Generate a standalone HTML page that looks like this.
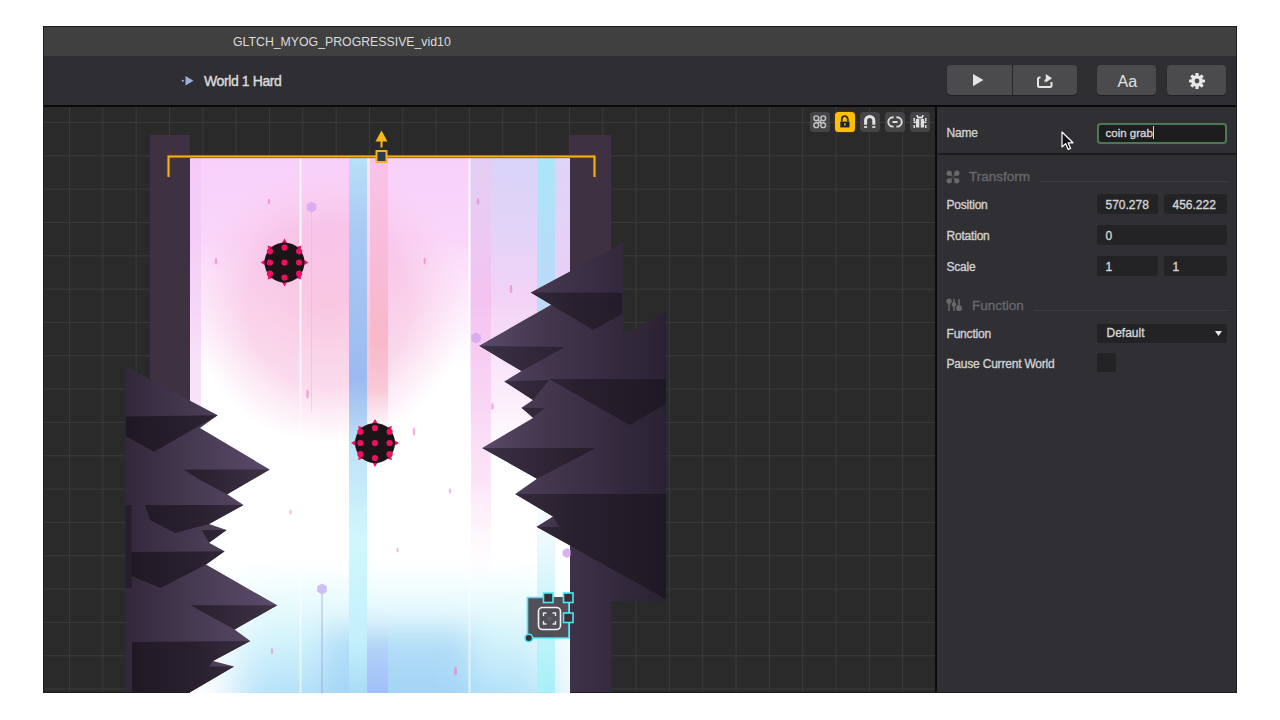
<!DOCTYPE html>
<html><head><meta charset="utf-8">
<style>
*{margin:0;padding:0;box-sizing:border-box}
html,body{width:1280px;height:720px;background:#fff;overflow:hidden;font-family:"Liberation Sans",sans-serif}
.a{position:absolute}
#win{left:43px;top:26px;width:1194px;height:667px;background:#302f34;border:1px solid #1c1c1c;overflow:visible}
#title{left:0;top:0;width:1192px;height:29px;background:#404040}
#tb{left:0;top:29px;width:1192px;height:50px;background:#2f2e33}
#tb>*{margin-top:1px}
#tline{left:0;top:78px;width:1192px;height:2px;background:#0a0a0c}
#canvas{left:0;top:80px;width:892px;height:585px;background-color:#2a2a2a;
 background-image:linear-gradient(#3a3a3a 1px,transparent 1px),linear-gradient(90deg,#3a3a3a 1px,transparent 1px);
 background-size:33.33px 33.33px;background-position:25px 15px}
#vline{left:891px;top:80px;width:2px;height:585px;background:#0a0a0c}
#panel{left:893px;top:80px;width:299px;height:585px;background:#302f34}
#panel>*{margin-left:1px}
.txt{color:#e6e6e6;white-space:nowrap}
.btn{background:#4b4b4d;border-radius:4px;box-shadow:0 1px 1px rgba(0,0,0,.35)}
.lbl{position:absolute;left:8.5px;font-size:12px;color:#d0d0d0;font-weight:normal;letter-spacing:-0.2px;-webkit-text-stroke:0.35px #d0d0d0}
.inp{position:absolute;background:#232325;border-radius:3px}
.val{position:absolute;font-size:12px;color:#d4d4d4;font-weight:normal;letter-spacing:0px;-webkit-text-stroke:0.35px #d4d4d4}
.ib{position:absolute;width:20px;height:20px;border-radius:3.5px;background:#454548}
</style></head><body>
<div id="win" class="a">
  <div id="title" class="a"><div class="a txt" style="left:189px;top:8px;font-size:12.3px;color:#dcdcdc">GLTCH_MYOG_PROGRESSIVE_vid10</div></div>
  <div id="tb" class="a">
    <div class="a txt" style="left:160px;top:16px;font-size:14px;color:#dadada;letter-spacing:-0.4px;-webkit-text-stroke:0.4px #dadada">World 1 Hard</div>
    <svg class="a" style="left:137px;top:18px" width="14" height="12" viewBox="0 0 14 12"><circle cx="1.8" cy="5.8" r="1" fill="#a8b8e0"/><path d="M4.5 1 L12.5 5.8 L4.5 10.6Z" fill="#9cb0e0"/></svg>
    <div class="a btn" style="left:902.5px;top:8px;width:130px;height:30px"></div>
    <div class="a" style="left:967.5px;top:8px;width:1px;height:30px;background:#262529"></div>
    <svg class="a" style="left:927px;top:15px" width="14" height="16" viewBox="0 0 14 16"><path d="M2 2 L12.4 8 L2 14.2Z" fill="#e4e4e4"/></svg>
    <svg class="a" style="left:991px;top:13px" width="18" height="20" viewBox="0 0 18 20"><path d="M5.5 7.5 H4.5 Q3 7.5 3 9 V15.5 Q3 17 4.5 17 H15 Q16.5 17 16.5 15.5 V12" stroke="#e4e4e4" stroke-width="2" fill="none"/><path d="M9.5 13.5 V10.5 Q9.5 9 11 9 H10.8 L10.8 4 L17 8.2 L10.8 12.4 V11 Q9.5 11 9.5 13.5Z" fill="#e4e4e4"/></svg>
    <div class="a btn" style="left:1052.5px;top:8px;width:59px;height:30px"></div>
    <div class="a txt" style="left:1073.5px;top:16px;font-size:16px;color:#e0e0e0">Aa</div>
    <div class="a btn" style="left:1123px;top:8px;width:59px;height:30px"></div>
    <svg class="a" style="left:1144px;top:15px" width="18" height="18" viewBox="0 0 18 18"><g fill="#e8e8e8"><circle cx="9" cy="9" r="5.8"/><rect x="7.4" y="1" width="3.2" height="16" rx="0.6"/><rect x="7.4" y="1" width="3.2" height="16" rx="0.6" transform="rotate(45 9 9)"/><rect x="7.4" y="1" width="3.2" height="16" rx="0.6" transform="rotate(90 9 9)"/><rect x="7.4" y="1" width="3.2" height="16" rx="0.6" transform="rotate(135 9 9)"/></g><circle cx="9" cy="9" r="2.4" fill="#4b4b4d"/></svg>
  </div>
  <div id="tline" class="a"></div>
  <div id="canvas" class="a">
    <svg class="a" style="left:0;top:0;overflow:visible" width="892" height="586" viewBox="44 107 892 586">
<defs>
<linearGradient id="gTop" x1="0" y1="158" x2="0" y2="693" gradientUnits="userSpaceOnUse"><stop offset="0.0000" stop-color="#f8d0fa" stop-opacity="1"/><stop offset="0.1533" stop-color="#fad6fa" stop-opacity="1"/><stop offset="0.2654" stop-color="#fcdefa" stop-opacity="0.6"/><stop offset="0.3963" stop-color="#fde8fa" stop-opacity="0.0"/></linearGradient>
<filter id="bl30" x="-50%" y="-50%" width="200%" height="200%"><feGaussianBlur stdDeviation="28"/></filter><filter id="bl15" x="-50%" y="-50%" width="200%" height="200%"><feGaussianBlur stdDeviation="14"/></filter><clipPath id="cLight"><rect x="190" y="158" width="380" height="535"/></clipPath>
<radialGradient id="gPink" cx="328" cy="305" r="138" gradientUnits="userSpaceOnUse"><stop offset="0" stop-color="#f6acd0" stop-opacity="0.6"/><stop offset="0.6" stop-color="#f6b6da" stop-opacity="0.5"/><stop offset="0.85" stop-color="#f8c4e2" stop-opacity="0.22"/><stop offset="1" stop-color="#f9c8e8" stop-opacity="0"/></radialGradient>
<radialGradient id="gBlue" cx="400" cy="705" r="150" gradientTransform="translate(400 705) scale(1.25 0.85) translate(-400 -705)" gradientUnits="userSpaceOnUse"><stop offset="0" stop-color="#94c8f4" stop-opacity="1"/><stop offset="0.45" stop-color="#a8d6f6" stop-opacity="0.85"/><stop offset="0.8" stop-color="#c8ecfa" stop-opacity="0.35"/><stop offset="1" stop-color="#d8f4fc" stop-opacity="0"/></radialGradient>
<radialGradient id="gCyanGlow" cx="290" cy="705" r="120" gradientTransform="translate(290 705) scale(1.2 1) translate(-290 -705)" gradientUnits="userSpaceOnUse"><stop offset="0" stop-color="#b8ecfa" stop-opacity="0.9"/><stop offset="1" stop-color="#d8f6fc" stop-opacity="0"/></radialGradient>
<linearGradient id="gBotV" x1="0" y1="560" x2="0" y2="710" gradientUnits="userSpaceOnUse"><stop offset="0.0000" stop-color="#e0f8fc" stop-opacity="0"/><stop offset="0.2667" stop-color="#d8f8fc" stop-opacity="0.55"/><stop offset="0.5667" stop-color="#c4eefa" stop-opacity="0.8"/><stop offset="0.8800" stop-color="#b0e0f8" stop-opacity="0.95"/></linearGradient>
<filter id="blX" x="-30%" y="-30%" width="160%" height="160%"><feGaussianBlur stdDeviation="22 6"/></filter>
<linearGradient id="gGap" x1="0" y1="158" x2="0" y2="693" gradientUnits="userSpaceOnUse"><stop offset="0.0000" stop-color="#ffffff" stop-opacity="0.6"/><stop offset="0.2654" stop-color="#ffffff" stop-opacity="0.3"/><stop offset="0.4523" stop-color="#ffffff" stop-opacity="0"/></linearGradient>
<linearGradient id="gBlueS" x1="0" y1="158" x2="0" y2="693" gradientUnits="userSpaceOnUse"><stop offset="0.0000" stop-color="#b8e0f8" stop-opacity="1"/><stop offset="0.1346" stop-color="#aacaf4" stop-opacity="1"/><stop offset="0.4150" stop-color="#9cbaf0" stop-opacity="1"/><stop offset="0.5458" stop-color="#c0e2f8" stop-opacity="1"/><stop offset="0.7140" stop-color="#d0f8fc" stop-opacity="1"/><stop offset="0.9009" stop-color="#c4f0fc" stop-opacity="1"/><stop offset="1.0000" stop-color="#a8dcf6" stop-opacity="1"/></linearGradient>
<linearGradient id="gPinkS" x1="0" y1="158" x2="0" y2="693" gradientUnits="userSpaceOnUse"><stop offset="0.0000" stop-color="#f8c4ea" stop-opacity="1"/><stop offset="0.1533" stop-color="#f8bcdc" stop-opacity="1"/><stop offset="0.3402" stop-color="#f8b8c8" stop-opacity="1"/><stop offset="0.4336" stop-color="#f8c4d2" stop-opacity="0.85"/><stop offset="0.5271" stop-color="#ffeef2" stop-opacity="0.0"/><stop offset="0.8262" stop-color="#ffffff" stop-opacity="0"/><stop offset="0.9196" stop-color="#b0bcf8" stop-opacity="0.35"/><stop offset="1.0000" stop-color="#a0b4fc" stop-opacity="0.65"/></linearGradient>
<linearGradient id="gMidP" x1="0" y1="158" x2="0" y2="693" gradientUnits="userSpaceOnUse"><stop offset="0.0000" stop-color="#f9cdf2" stop-opacity="0.0"/><stop offset="0.2654" stop-color="#f8c0dc" stop-opacity="0.0"/><stop offset="0.4897" stop-color="#fad0e4" stop-opacity="0.0"/></linearGradient>
<linearGradient id="gLav" x1="0" y1="158" x2="0" y2="693" gradientUnits="userSpaceOnUse"><stop offset="0.0000" stop-color="#d8d4f8" stop-opacity="1"/><stop offset="0.1346" stop-color="#e2d4f8" stop-opacity="1"/><stop offset="0.2654" stop-color="#f2d2f6" stop-opacity="0.95"/><stop offset="0.4523" stop-color="#fae2f8" stop-opacity="0.6"/><stop offset="0.6019" stop-color="#ffffff" stop-opacity="0"/></linearGradient>
<linearGradient id="gLavP" x1="0" y1="158" x2="0" y2="693" gradientUnits="userSpaceOnUse"><stop offset="0.0000" stop-color="#f0c8f0" stop-opacity="0.5"/><stop offset="0.2654" stop-color="#f4b8ec" stop-opacity="0.6"/><stop offset="0.6019" stop-color="#f8c8f0" stop-opacity="0.5"/><stop offset="0.8262" stop-color="#ffffff" stop-opacity="0"/></linearGradient>
<linearGradient id="gRZ" x1="0" y1="158" x2="0" y2="693" gradientUnits="userSpaceOnUse"><stop offset="0.0000" stop-color="#e0d4f8" stop-opacity="1"/><stop offset="0.3215" stop-color="#eccef6" stop-opacity="1"/><stop offset="0.5458" stop-color="#fae6fa" stop-opacity="0.5"/><stop offset="0.7140" stop-color="#ffffff" stop-opacity="0"/></linearGradient>
<linearGradient id="gCyan" x1="0" y1="158" x2="0" y2="693" gradientUnits="userSpaceOnUse"><stop offset="0.0000" stop-color="#aae6f8" stop-opacity="1"/><stop offset="0.1907" stop-color="#b8dcf8" stop-opacity="1"/><stop offset="0.4523" stop-color="#c4d4f8" stop-opacity="0.9"/><stop offset="0.6393" stop-color="#e8f6fc" stop-opacity="0.3"/><stop offset="0.8262" stop-color="#c8f4fc" stop-opacity="0.9"/><stop offset="1.0000" stop-color="#a8f0f8" stop-opacity="1"/></linearGradient>
<linearGradient id="gWL" x1="0" y1="158" x2="0" y2="693" gradientUnits="userSpaceOnUse"><stop offset="0.0000" stop-color="#ffffff" stop-opacity="0.7"/><stop offset="0.1720" stop-color="#ffffff" stop-opacity="0.95"/><stop offset="0.4150" stop-color="#ffffff" stop-opacity="0.6"/><stop offset="0.6393" stop-color="#ffffff" stop-opacity="0.3"/><stop offset="1.0000" stop-color="#ffffff" stop-opacity="0.6"/></linearGradient>
<linearGradient id="gLEdge" x1="0" y1="158" x2="0" y2="693" gradientUnits="userSpaceOnUse"><stop offset="0.0000" stop-color="#f0c0f4" stop-opacity="0.35"/><stop offset="0.2654" stop-color="#f0c0f4" stop-opacity="0.5"/><stop offset="0.5458" stop-color="#f2c8f4" stop-opacity="0.5"/><stop offset="0.7514" stop-color="#ffffff" stop-opacity="0"/></linearGradient>
<linearGradient id="gSpU" x1="125" y1="0" x2="280" y2="0" gradientUnits="userSpaceOnUse"><stop offset="0" stop-color="#32283a"/><stop offset="0.45" stop-color="#463a52"/><stop offset="1" stop-color="#5e4c6e"/></linearGradient>
<linearGradient id="gSpD" x1="125" y1="0" x2="280" y2="0" gradientUnits="userSpaceOnUse"><stop offset="0" stop-color="#1f1824"/><stop offset="0.5" stop-color="#2a2131"/><stop offset="1" stop-color="#403548"/></linearGradient>
<linearGradient id="gSpUR" x1="666" y1="0" x2="480" y2="0" gradientUnits="userSpaceOnUse"><stop offset="0" stop-color="#2a2232"/><stop offset="0.35" stop-color="#372c41"/><stop offset="0.73" stop-color="#473a52"/><stop offset="1" stop-color="#5c4b6c"/></linearGradient>
<linearGradient id="gSpDR" x1="666" y1="0" x2="480" y2="0" gradientUnits="userSpaceOnUse"><stop offset="0" stop-color="#1e1824"/><stop offset="0.5" stop-color="#29202f"/><stop offset="1" stop-color="#3c3146"/></linearGradient>
<g id="ball"><g fill="#ee1060"><path d="M0 -24 L3.2 -18.5 L-3.2 -18.5Z" transform="rotate(0)"/><path d="M0 -24 L3.2 -18.5 L-3.2 -18.5Z" transform="rotate(45)"/><path d="M0 -24 L3.2 -18.5 L-3.2 -18.5Z" transform="rotate(90)"/><path d="M0 -24 L3.2 -18.5 L-3.2 -18.5Z" transform="rotate(135)"/><path d="M0 -24 L3.2 -18.5 L-3.2 -18.5Z" transform="rotate(180)"/><path d="M0 -24 L3.2 -18.5 L-3.2 -18.5Z" transform="rotate(225)"/><path d="M0 -24 L3.2 -18.5 L-3.2 -18.5Z" transform="rotate(270)"/><path d="M0 -24 L3.2 -18.5 L-3.2 -18.5Z" transform="rotate(315)"/></g><circle r="20" fill="#1b1517"/><g fill="#ee1060"><circle cx="0" cy="-15" r="3.1"/><circle cx="0" cy="15" r="3.1"/><circle cx="-14.6" cy="0" r="3.1"/><circle cx="14.6" cy="0" r="3.1"/><circle cx="0" cy="0" r="3.1"/><circle cx="-14.6" cy="-11.2" r="3.1"/><circle cx="14.6" cy="-11.2" r="3.1"/><circle cx="-14.6" cy="11.2" r="3.1"/><circle cx="14.6" cy="11.2" r="3.1"/></g></g>
</defs>
<rect x="150" y="135" width="40" height="557" fill="#3d3142"/>
<rect x="570" y="135" width="41" height="557" fill="#3d3142"/>
<rect x="190" y="158" width="380" height="535" fill="#ffffff"/>
<rect x="190" y="158" width="380" height="535" fill="url(#gTop)"/>
<rect x="190" y="158" width="380" height="535" fill="url(#gPink)"/>
<g clip-path="url(#cLight)">
<rect x="235" y="560" width="320" height="150" fill="url(#gBotV)" filter="url(#blX)"/>
<rect x="325" y="630" width="145" height="90" fill="#94c8f4" opacity="0.5" filter="url(#bl15)"/>
</g>
<rect x="190" y="158" width="11" height="535" fill="url(#gLEdge)"/>
<rect x="388" y="158" width="34" height="535" fill="url(#gMidP)"/>
<rect x="469" y="158" width="68" height="535" fill="url(#gLav)"/>
<rect x="471" y="158" width="20" height="535" fill="url(#gLavP)"/>
<rect x="555" y="158" width="15" height="535" fill="url(#gRZ)"/>
<rect x="349" y="158" width="18" height="535" fill="url(#gBlueS)"/>
<rect x="367" y="158" width="21" height="535" fill="url(#gPinkS)"/>
<rect x="367" y="158" width="3" height="535" fill="url(#gGap)"/>
<rect x="537" y="158" width="18" height="535" fill="url(#gCyan)"/>
<rect x="299.5" y="158" width="2" height="535" fill="url(#gWL)"/>
<rect x="468.5" y="158" width="2" height="535" fill="url(#gWL)"/>
<g fill="#d6aaf0" opacity="0.9">
 <path d="M311.5 201.5 L316.3 204.2 L316.3 209.8 L311.5 212.5 L306.7 209.8 L306.7 204.2Z"/>
 <path d="M476.0 332.5 L480.8 335.2 L480.8 340.8 L476.0 343.5 L471.2 340.8 L471.2 335.2Z"/>
 <path d="M322.0 583.5 L326.8 586.2 L326.8 591.8 L322.0 594.5 L317.2 591.8 L317.2 586.2Z" fill="#c8b8f2"/>
 <path d="M567.0 548.0 L571.3 550.5 L571.3 555.5 L567.0 558.0 L562.7 555.5 L562.7 550.5Z"/>
</g>
<rect x="311" y="212" width="1" height="200" fill="#e8a8e8" opacity="0.4"/>
<rect x="321.5" y="594" width="1" height="100" fill="#9aa0d0" opacity="0.7"/>
<g fill="#f070c0" opacity="0.55"><ellipse cx="269" cy="201.5" rx="1.2" ry="3"/><ellipse cx="216" cy="261" rx="1.2" ry="3.5"/><ellipse cx="424.7" cy="261" rx="1.2" ry="3.5"/><ellipse cx="478" cy="201.5" rx="1.2" ry="3.5"/><ellipse cx="511" cy="289" rx="1.3" ry="4"/><ellipse cx="307.5" cy="394" rx="1.3" ry="4.5"/><ellipse cx="414" cy="431.5" rx="1.3" ry="4"/><ellipse cx="450" cy="491" rx="1" ry="3"/><ellipse cx="492.5" cy="406.5" rx="1.2" ry="3.5"/><ellipse cx="272" cy="651" rx="1.2" ry="3"/><ellipse cx="455.6" cy="671" rx="1.5" ry="4.5"/><ellipse cx="397.5" cy="550" rx="1" ry="2.5"/><ellipse cx="290.5" cy="512" rx="1" ry="2.5"/><ellipse cx="554" cy="431" rx="1.2" ry="4"/></g>
<use href="#ball" x="284.5" y="262.5"/>
<use href="#ball" x="375" y="443"/>
<!-- left spikes -->
<g>
 <polygon fill="url(#gSpU)" points="125.6,366.8 217.7,415.2 200,428 269.7,469.5 227.2,494.3 243.5,505 209,524 226.6,530 209,542.7 224.6,551.2 206,564.6 277.3,605.3 234.6,629.5 250.3,641 213,661 234,666.5 190.5,692 125.6,692"/>
 <g fill="url(#gSpD)">
  <polygon points="125.6,416.4 217.7,415.2 154,451.8 125.6,436"/>
  <polygon points="183.5,469.5 269.7,469.5 227.2,494.3 200,480"/>
  <polygon points="145,505 243.5,505 209,524 175,533 150,520"/>
  <polygon points="201.8,530 226.6,530 209,542.7"/>
  <polygon points="129,552 224.6,551.2 206,564.6 160.6,588 129,575"/>
  <polygon points="190.5,605.3 277.3,605.3 234.6,629.5"/>
  <polygon points="132,642 250.3,641 213,661 190.5,692 132,692"/>
  <polygon points="195,666.5 234,666.5 190.5,692 190.5,670"/>
 </g>
 <rect x="125.6" y="505" width="6" height="83" fill="#261e2c"/>
</g>
<!-- right spikes -->
<g>
 <polygon fill="url(#gSpUR)" points="623,243 530.7,292.5 551.6,304.4 479.2,345.8 521.5,371 504.3,381.4 533,400 521.5,407.8 533,418 482.2,448 537,478.7 515.2,493.9 553,516.6 536.5,526.8 570.6,545.8 570.6,692 611,692 611,601 666,601 666,311 623,335"/>
 <g fill="url(#gSpDR)">
  <polygon points="530.7,292.5 622,292.5 622,314 593,330"/>
  <polygon points="479.2,345.8 565,347 521.5,371"/>
  <polygon points="504.3,381.4 549,380 533,400"/>
  <polygon points="549,379 666,379 666,404 629.7,425"/>
  <polygon points="521.5,407.8 545,408 533,417"/>
  <polygon points="482.2,448 596,448 537,478.7"/>
  <polygon points="515.2,493.9 666,494 666,599 608,567 570.6,546 553,516.6"/>
  <polygon points="536.5,526.8 569,527 570.6,545.8"/>
 </g>
</g>

<!-- selected -->
<g>
 <rect x="527.5" y="597" width="41.5" height="41" rx="2" fill="#4a4650" opacity="0.95"/>
 <path d="M548 597.5 H527.5 V638 H569 V597.5" fill="none" stroke="#50e4f4" stroke-width="1.6"/>
 <rect x="538.5" y="607.5" width="22" height="22" rx="4" fill="none" stroke="#f2f2f2" stroke-width="1.6"/>
 <path d="M543.5 616 V613 H546.5 M552.5 613 H555.5 V616 M555.5 621 V624 H552.5 M546.5 624 H543.5 V621" fill="none" stroke="#e8e8e8" stroke-width="1.4"/>
 <circle cx="549.5" cy="618.5" r="2.2" fill="#5e5a62"/>
 <g fill="#3a3038" stroke="#50e4f4" stroke-width="1.6">
  <rect x="543.5" y="593" width="9.5" height="9.5"/>
  <rect x="563.5" y="593" width="9.5" height="9.5"/>
  <rect x="563.5" y="613" width="9.5" height="9.5"/>
  <circle cx="528.8" cy="638" r="3.8"/>
 </g>
</g>
<!-- bracket -->
<g>
 <path d="M168.5 177 V156.5 H594.5 V177" fill="none" stroke="#7a4a00" stroke-width="3.5" opacity="0.6"/>
 <path d="M168.5 177 V156.5 H594.5 V177" fill="none" stroke="#f5b020" stroke-width="2"/>
 <rect x="376.5" y="151" width="10" height="11" fill="#2e3a4a" stroke="#f5b020" stroke-width="2"/>
 <path d="M381.5 130.5 L387.5 141.5 L375.5 141.5Z" fill="#f8b818"/>
 <rect x="380.5" y="141" width="2" height="6.5" fill="#f8b818"/>
</g>
</svg>

  </div>
<div class="ib" style="left:766px;top:85px"><svg width="20" height="20" viewBox="0 0 20 20"><g fill="none" stroke="#c4c4c4" stroke-width="1.4"><circle cx="6.3" cy="6.3" r="2.4"/><circle cx="13.2" cy="6.3" r="2.4"/><circle cx="6.3" cy="13.2" r="2.4"/><circle cx="13.2" cy="13.2" r="2.4"/><path d="M8 8 L11.5 11.5 M11.5 8 L8 11.5"/></g></svg></div>
<div class="ib" style="left:791px;top:85px;background:#f9bf0a;box-shadow:0 0 1px 1px rgba(120,60,0,.5)"><svg width="20" height="20" viewBox="0 0 20 20"><path d="M6.8 9.5 V7.2 A3 3 0 0 1 12.8 7.2 V9.5" fill="none" stroke="#3a2a10" stroke-width="1.8"/><rect x="5.3" y="9.6" width="9.2" height="5.8" fill="#1c2238"/><rect x="9.2" y="11" width="1.4" height="2.8" rx="0.7" fill="#f0c020"/></svg></div>
<div class="ib" style="left:816px;top:85px"><svg width="20" height="20" viewBox="0 0 20 20"><path d="M5.6 12.8 V8.5 A4.1 4.1 0 0 1 13.8 8.5 V12.8" fill="none" stroke="#e2e2e2" stroke-width="3"/><rect x="4.1" y="14.2" width="3" height="1.6" fill="#f0f0f0"/><rect x="12.3" y="14.2" width="3" height="1.6" fill="#f0f0f0"/></svg></div>
<div class="ib" style="left:841px;top:85px"><svg width="20" height="20" viewBox="0 0 20 20"><path d="M8.6 5.2 H8 A4.7 4.7 0 0 0 8 14.6 H8.6 M11.4 5.2 H12 A4.7 4.7 0 0 1 12 14.6 H11.4" fill="none" stroke="#e0e0e0" stroke-width="1.9"/><rect x="7.3" y="9.1" width="5.4" height="1.8" rx="0.9" fill="#e0e0e0"/></svg></div>
<div class="ib" style="left:866px;top:85px"><svg width="20" height="20" viewBox="0 0 20 20"><g fill="#dedede"><rect x="6.5" y="3" width="1.5" height="2"/><rect x="12" y="3" width="1.5" height="2"/><rect x="7" y="4.5" width="6" height="2"/><path d="M6 7 H9.3 V15.5 H6Z M10.7 7 H14 V15.5 H10.7Z"/><rect x="3.5" y="6" width="1.5" height="3"/><rect x="15" y="6" width="1.5" height="3"/><rect x="3.5" y="9.5" width="2.5" height="1.5"/><rect x="14" y="9.5" width="2.5" height="1.5"/><rect x="3.5" y="13" width="1.5" height="3"/><rect x="15" y="13" width="1.5" height="3"/></g></svg></div>
  <div id="vline" class="a"></div>
  <div id="panel" class="a">
    <div class="lbl" style="top:18.75px">Name</div>
<div class="inp" style="left:159px;top:15.5px;width:130px;height:21.5px;border:2px solid #4b7853;border-radius:4px;background:#1d1c1e;box-shadow:0 0 1px rgba(80,130,90,.6)"></div>
<div class="val" style="left:167.5px;top:18.5px;font-size:11.5px;letter-spacing:0px">coin grab<span style="display:inline-block;width:1px;height:13px;background:#d8d8d8;vertical-align:-2.5px;margin-left:0.5px"></span></div>
<div class="a" style="left:0;top:45.5px;width:298px;height:2px;background:#1c1b1e"></div>
<svg class="a" style="left:8px;top:63px" width="14" height="14" viewBox="0 0 14 14"><path d="M3.2 3.2 L10.8 10.8 M10.8 3.2 L3.2 10.8" stroke="#5a5a5a" stroke-width="1.4"/><g fill="#6a6a6a"><circle cx="3.2" cy="3.2" r="2.6"/><circle cx="10.8" cy="3.2" r="2.6"/><circle cx="3.2" cy="10.8" r="2.6"/><circle cx="10.8" cy="10.8" r="2.6"/></g><circle cx="7" cy="7" r="1.6" fill="#3a3a3e"/></svg>
<div class="a txt" style="left:31px;top:62px;font-size:13.5px;letter-spacing:0px;color:#68686a;-webkit-text-stroke:0.35px #68686a">Transform</div>
<div class="a" style="left:102px;top:74px;width:187px;height:1px;background:#3e3d42"></div>
<div class="lbl" style="top:90.75px">Position</div>
<div class="inp" style="left:159px;top:87px;width:61px;height:20px"></div>
<div class="inp" style="left:225.5px;top:87px;width:63px;height:20px"></div>
<div class="val" style="left:167.5px;top:91px">570.278</div>
<div class="val" style="left:234.5px;top:91px">456.222</div>
<div class="lbl" style="top:121.75px">Rotation</div>
<div class="inp" style="left:159px;top:118px;width:130px;height:20px"></div>
<div class="val" style="left:167.5px;top:122px">0</div>
<div class="lbl" style="top:152.75px">Scale</div>
<div class="inp" style="left:159px;top:149px;width:61px;height:20px"></div>
<div class="inp" style="left:225.5px;top:149px;width:63px;height:20px"></div>
<div class="val" style="left:167.5px;top:153px">1</div>
<div class="val" style="left:234.5px;top:153px">1</div>
<svg class="a" style="left:8px;top:191px" width="17" height="15" viewBox="0 0 17 15"><g stroke="#6a6a6a" stroke-width="1.5"><line x1="3" y1="1" x2="3" y2="13"/><line x1="8" y1="1" x2="8" y2="13"/><line x1="13" y1="1" x2="13" y2="10"/></g><g fill="#6a6a6a"><circle cx="3" cy="3.2" r="2.6"/><circle cx="8" cy="6.5" r="2.3"/><circle cx="13" cy="10.2" r="2.9"/></g></svg>
<div class="a txt" style="left:34px;top:191px;font-size:13.5px;letter-spacing:0px;color:#68686a;-webkit-text-stroke:0.35px #68686a">Function</div>
<div class="a" style="left:96px;top:203px;width:193px;height:1px;background:#3e3d42"></div>
<div class="lbl" style="top:220.25px">Function</div>
<div class="inp" style="left:159px;top:217px;width:130px;height:19px"></div>
<div class="val" style="left:168.5px;top:219px">Default</div>
<svg class="a" style="left:277px;top:224px" width="7" height="5" viewBox="0 0 7 5"><path d="M0 0 H7 L3.5 5Z" fill="#e6e6e6"/></svg>
<div class="lbl" style="top:249.75px">Pause Current World</div>
<div class="inp" style="left:159px;top:246px;width:19px;height:19px"></div>

  </div>
<svg class="a" style="left:1017px;top:104px" width="14" height="20" viewBox="0 0 14 20"><path d="M1 1 L1 16 L4.6 12.6 L7.2 18.4 L9.6 17.4 L7.1 11.8 L12 11.8Z" fill="#111" stroke="#fff" stroke-width="1.2" stroke-linejoin="round"/></svg>
</div>
</body></html>
